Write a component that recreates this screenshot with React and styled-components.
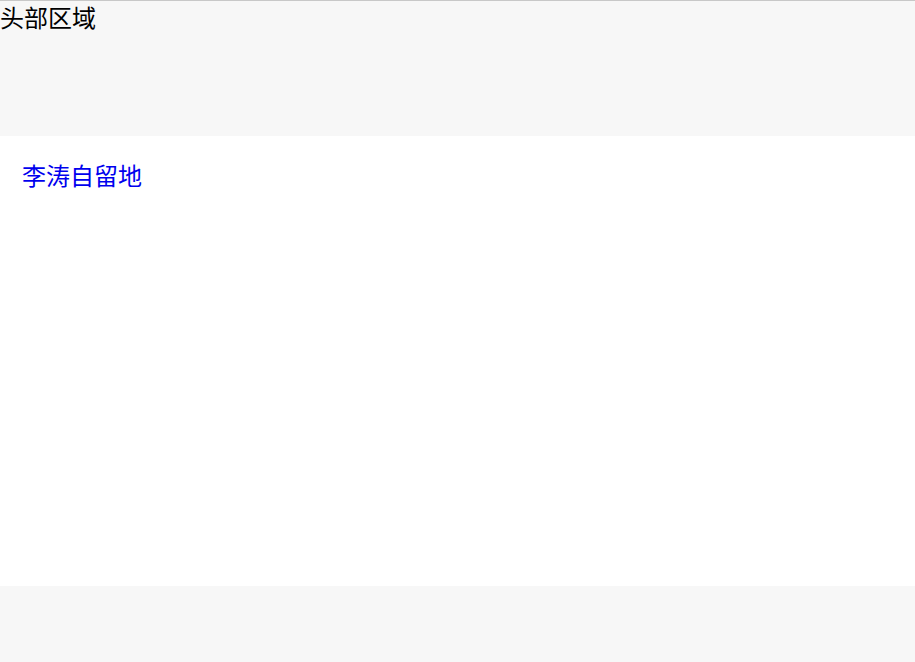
import styled, { createGlobalStyle } from 'styled-components'

const Global = createGlobalStyle`
  html, body {
    margin: 0;
    padding: 0;
    background: #fff;
    font-family: "Noto Sans CJK SC", "Liberation Sans", sans-serif;
  }
`

const Page = styled.div`
  display: flex;
  flex-direction: column;
  height: 662px;
`

const Header = styled.header`
  height: 135px;
  background: #f7f7f7;
  border-top: 1px solid #c8c8c8;
  font-size: 24px;
  line-height: 31px;
  color: #000;
`

const Main = styled.main`
  flex: 1;
  background: #fff;
  padding: 19px 22px;
`

const NavLink = styled.a`
  color: #0000ee;
  text-decoration: none;
  font-size: 24px;
  line-height: 40px;
`

const Footer = styled.footer`
  height: 76px;
  background: #f7f7f7;
`

export default function App () {
  return (
    <Page>
      <Global />
      <Header>头部区域</Header>
      <Main>
        <NavLink href="#">李涛自留地</NavLink>
      </Main>
      <Footer />
    </Page>
  )
}
